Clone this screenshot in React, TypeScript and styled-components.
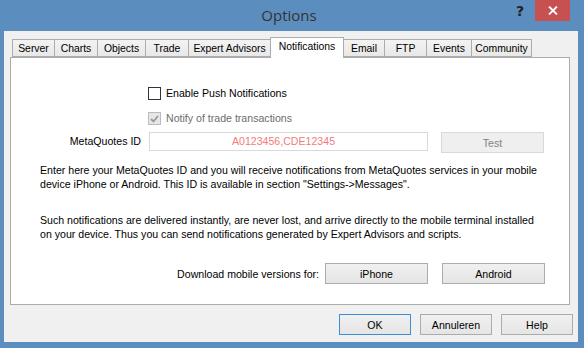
import styled, { createGlobalStyle } from "styled-components";

const GlobalStyle = createGlobalStyle`
  html, body {
    margin: 0;
    padding: 0;
    background: #5b8ebf;
  }
  * {
    box-sizing: border-box;
  }
`;

interface TabItem {
  label: string;
  width: number;
  active?: boolean;
}

// widths are the spacing between tab edges, borders overlap by 1px
const tabs: TabItem[] = [
  { label: "Server", width: 42 },
  { label: "Charts", width: 43 },
  { label: "Objects", width: 48 },
  { label: "Trade", width: 43 },
  { label: "Expert Advisors", width: 82 },
  { label: "Notifications", width: 73, active: true },
  { label: "Email", width: 41 },
  { label: "FTP", width: 42 },
  { label: "Events", width: 45 },
  { label: "Community", width: 60 },
];

const Window = styled.div`
  width: 584px;
  height: 348px;
  background: #5b8ebf;
  display: flex;
  flex-direction: column;
  font-family: "Liberation Sans", Arial, sans-serif;
  font-size: 10.6px;
  color: #000;
`;

const TitleBar = styled.div`
  height: 31px;
  display: flex;
  align-items: flex-start;
  position: relative;
`;

const Title = styled.div`
  flex: 1;
  text-align: center;
  padding-top: 5px;
  padding-right: 6px;
  font-family: "Open Sans", "Noto Sans", sans-serif;
  font-size: 15px;
  font-weight: 400;
  color: #333;
`;

const HelpGlyph = styled.div`
  position: absolute;
  left: 516px;
  top: 3px;
  font-family: "DejaVu Sans", sans-serif;
  font-weight: bold;
  font-size: 14px;
  color: #222;
`;

const CloseButton = styled.div`
  position: absolute;
  left: 535px;
  top: 0;
  width: 35px;
  height: 21px;
  background: #c75050;
  display: flex;
  align-items: center;
  justify-content: center;
`;

const Client = styled.div`
  flex: 1;
  margin: 0 6px 6px 4px;
  background: #f0f0f0;
  padding: 6px 4px 0 6px;
  display: flex;
  flex-direction: column;
`;

const TabsRow = styled.div`
  height: 20px;
  display: flex;
  align-items: flex-end;
  padding-left: 2px;
  position: relative;
  z-index: 1;
`;

const Tab = styled.div<{ $w: number; $active?: boolean }>`
  width: ${({ $w }) => $w + 1}px;
  height: ${({ $active }) => ($active ? 21 : 18)}px;
  margin-bottom: ${({ $active }) => ($active ? -1 : 0)}px;
  margin-left: -1px;
  background: ${({ $active }) => ($active ? "#ffffff" : "linear-gradient(#f3f3f3, #e8e8e8)")};
  border: 1px solid #acacac;
  border-bottom: ${({ $active }) => ($active ? "none" : "1px solid #acacac")};
  display: flex;
  justify-content: center;
  padding-top: 3px;
  white-space: nowrap;
  font-size: 10.4px;
  line-height: 12px;
  position: relative;
  z-index: ${({ $active }) => ($active ? 2 : 0)};

  &:first-child {
    margin-left: 0;
  }
`;

const Panel = styled.div`
  height: 248px;
  margin-right: 4px;
  background: #ffffff;
  border: 1px solid #acacac;
  display: flex;
  flex-direction: column;
`;

const CheckRow = styled.label<{ $top: number; $disabled?: boolean }>`
  margin-top: ${({ $top }) => $top}px;
  padding-left: 137px;
  height: 13px;
  display: flex;
  align-items: center;
  gap: 5px;
  color: ${({ $disabled }) => ($disabled ? "#6d6d6d" : "#000")};
  line-height: 13px;
`;

const Box = styled.span<{ $disabled?: boolean }>`
  width: 13px;
  height: 13px;
  border: 1px solid ${({ $disabled }) => ($disabled ? "#bcbcbc" : "#333")};
  background: ${({ $disabled }) => ($disabled ? "#e6e6e6" : "#fff")};
  display: flex;
  align-items: center;
  justify-content: center;
  flex-shrink: 0;
`;

const IdRow = styled.div`
  margin-top: 7px;
  height: 21px;
  display: flex;
  align-items: flex-start;
`;

const IdLabel = styled.div`
  width: 130px;
  text-align: right;
  line-height: 19px;
  margin-right: 8px;
`;

const IdInput = styled.div`
  width: 279px;
  height: 19px;
  border: 1px solid #d9d9d9;
  background: #fff;
  color: #f27b7b;
  text-align: center;
  line-height: 17px;
  padding-right: 10px;
`;

const Button = styled.div<{ $w: number; $disabled?: boolean; $default?: boolean }>`
  width: ${({ $w }) => $w}px;
  height: 21px;
  border: 1px solid
    ${({ $disabled, $default }) => ($disabled ? "#d9d9d9" : $default ? "#3c8ed6" : "#acacac")};
  background: ${({ $disabled }) => ($disabled ? "#efefef" : "linear-gradient(#f0f0f0, #e5e5e5)")};
  color: ${({ $disabled }) => ($disabled ? "#838383" : "#000")};
  display: flex;
  align-items: center;
  justify-content: center;
  flex-shrink: 0;
`;

const TestButton = styled(Button)`
  margin-left: 13px;
`;

const Paragraph = styled.p<{ $top: number }>`
  margin: ${({ $top }) => $top}px 0 0;
  padding-left: 29px;
  line-height: 14px;
`;

const DownloadRow = styled.div`
  margin-top: 22px;
  display: flex;
  align-items: center;
  justify-content: flex-end;
  padding-right: 24px;
  gap: 14px;
`;

const DownloadLabel = styled.span`
  margin-right: -8px;
`;

const Footer = styled.div`
  margin-top: 9px;
  display: flex;
  justify-content: flex-end;
  gap: 9px;
  padding-right: 1px;
`;

const App = () => {
  return (
    <>
      <GlobalStyle />
      <Window>
        <TitleBar>
          <Title>Options</Title>
          <HelpGlyph>?</HelpGlyph>
          <CloseButton>
            <svg width="10" height="9" viewBox="0 0 10 9">
              <path d="M1 0.5 L9 8.5 M9 0.5 L1 8.5" stroke="#fff" strokeWidth="1.8" />
            </svg>
          </CloseButton>
        </TitleBar>
        <Client>
          <TabsRow>
            {tabs.map(tab => (
              <Tab key={tab.label} $w={tab.width} $active={tab.active}>
                {tab.label}
              </Tab>
            ))}
          </TabsRow>
          <Panel>
            <CheckRow $top={29}>
              <Box />
              Enable Push Notifications
            </CheckRow>
            <CheckRow $top={12} $disabled>
              <Box $disabled>
                <svg width="9" height="8" viewBox="0 0 9 8">
                  <path d="M1 4 L3.5 6.5 L8 1" stroke="#9a9a9a" strokeWidth="1.8" fill="none" />
                </svg>
              </Box>
              Notify of trade transactions
            </CheckRow>
            <IdRow>
              <IdLabel>MetaQuotes ID</IdLabel>
              <IdInput>A0123456,CDE12345</IdInput>
              <TestButton $w={103} $disabled>
                Test
              </TestButton>
            </IdRow>
            <Paragraph $top={10}>
              Enter here your MetaQuotes ID and you will receive notifications from MetaQuotes services in your mobile
              <br />
              device iPhone or Android. This ID is available in section "Settings-&gt;Messages".
            </Paragraph>
            <Paragraph $top={22}>
              Such notifications are delivered instantly, are never lost, and arrive directly to the mobile terminal installed
              <br />
              on your device. Thus you can send notifications generated by Expert Advisors and scripts.
            </Paragraph>
            <DownloadRow>
              <DownloadLabel>Download mobile versions for:</DownloadLabel>
              <Button $w={103}>iPhone</Button>
              <Button $w={103}>Android</Button>
            </DownloadRow>
          </Panel>
          <Footer>
            <Button $w={72} $default>
              OK
            </Button>
            <Button $w={72}>Annuleren</Button>
            <Button $w={72}>Help</Button>
          </Footer>
        </Client>
      </Window>
    </>
  );
};

export default App;
